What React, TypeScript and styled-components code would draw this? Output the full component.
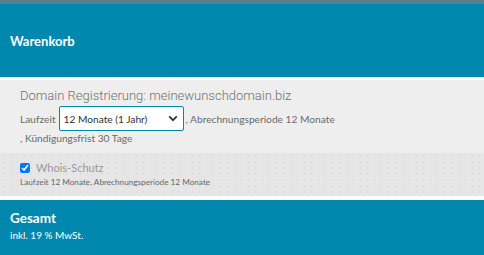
import styled, {createGlobalStyle} from 'styled-components'

const GlobalStyle = createGlobalStyle`
  html, body {
    margin: 0;
    padding: 0;
    background: #ffffff;
  }
  body {
    font-family: Lato, 'Open Sans', sans-serif;
  }
`

const TEAL = '#0087ad'

function App() {
  return (
    <>
      <GlobalStyle />
      <Cart>
        <Header>
          <h1>Warenkorb</h1>
        </Header>
        <Item>
          <ItemTitle>Domain Registrierung: meinewunschdomain.biz</ItemTitle>
          <Terms>
            Laufzeit
            <SelectWrap>
              <select defaultValue="12">
                <option value="12">12 Monate (1 Jahr)</option>
                <option value="24">24 Monate (2 Jahre)</option>
              </select>
              <Chevron viewBox="0 0 12 8" aria-hidden>
                <path d="M1.5 1.5 L6 6 L10.5 1.5" />
              </Chevron>
            </SelectWrap>
            , Abrechnungsperiode 12 Monate
          </Terms>
          <Terms>, Kündigungsfrist 30 Tage</Terms>
        </Item>
        <Addon>
          <AddonLabel>
            <input type="checkbox" defaultChecked />
            <span>Whois-Schutz</span>
          </AddonLabel>
          <AddonInfo>Laufzeit 12 Monate, Abrechnungsperiode 12 Monate</AddonInfo>
        </Addon>
        <Total>
          <h2>Gesamt</h2>
          <p>inkl. 19 % MwSt.</p>
        </Total>
      </Cart>
    </>
  )
}

const Cart = styled.div`
  display: flex;
  flex-direction: column;
  width: 484px;
  height: 255px;
  overflow: hidden;
`

const Header = styled.div`
  background: ${TEAL};
  border-top: 4px solid #5b7f8d;
  height: 73px;
  display: flex;
  align-items: center;
  padding: 0 10px;

  h1 {
    margin: 0;
    font-size: 13px;
    font-weight: 700;
    color: #ffffff;
  }
`

const Item = styled.div`
  margin-top: 3px;
  background: #eeeeee;
  height: 73px;
  padding: 7px 20px 0;
  box-sizing: border-box;
`

const ItemTitle = styled.div`
  font-family: Roboto, 'Liberation Sans', sans-serif;
  font-weight: 300;
  font-size: 13px;
  color: #707070;
  line-height: 17px;
  margin-bottom: 2px;
`

const Terms = styled.div`
  display: flex;
  align-items: center;
  font-size: 10.2px;
  color: #6a6a6a;
  line-height: 14px;
  white-space: pre;
`

const SelectWrap = styled.div`
  position: relative;
  margin: 0 2px 0 3px;

  select {
    appearance: none;
    width: 125px;
    height: 25px;
    box-sizing: border-box;
    border: 1px solid ${TEAL};
    border-radius: 2px;
    background: #ffffff;
    padding: 0 0 0 4px;
    font-family: Lato, sans-serif;
    font-size: 10.2px;
    color: #333333;
    outline: none;
  }
`

const Chevron = styled.svg`
  position: absolute;
  right: 6px;
  top: 9px;
  width: 10px;
  height: 7px;
  pointer-events: none;

  path {
    fill: none;
    stroke: #333333;
    stroke-width: 2.2;
  }
`

const Addon = styled.div`
  height: 43px;
  box-sizing: border-box;
  padding: 8px 20px 0;
  background-color: #e6e6e6;
  background-image: radial-gradient(#dadada 0.6px, transparent 0.9px);
  background-size: 7px 6px;
`

const AddonLabel = styled.label`
  display: flex;
  align-items: center;
  gap: 6px;
  font-size: 11px;
  color: #9a9a9a;

  input {
    margin: 0;
    width: 10px;
    height: 10px;
    accent-color: #0075ff;
  }
`

const AddonInfo = styled.div`
  margin-top: 3px;
  font-size: 8.2px;
  color: #666666;
`

const Total = styled.div`
  margin-top: 4px;
  flex: 1;
  background: ${TEAL};
  padding: 10px 10px 0;

  h2 {
    margin: 0;
    font-size: 13.5px;
    font-weight: 700;
    color: #ffffff;
    line-height: 16px;
  }

  p {
    margin: 3px 0 0;
    font-size: 10px;
    color: #ffffff;
  }
`

export default App
